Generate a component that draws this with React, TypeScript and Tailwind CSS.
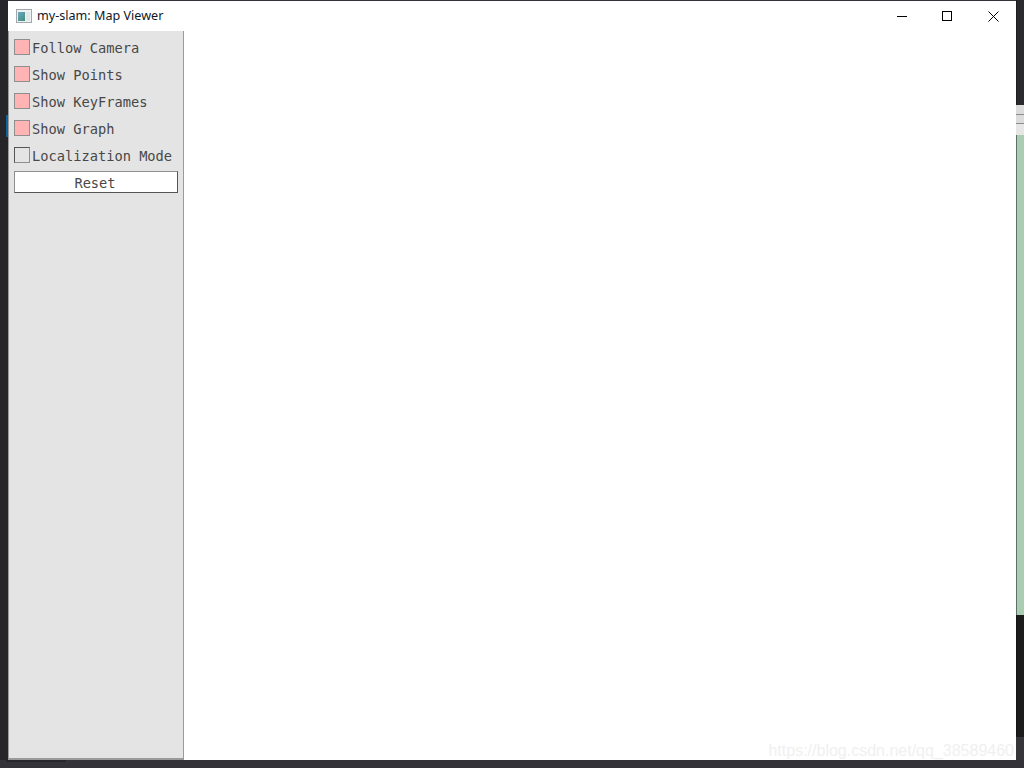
const mono = "font-['DejaVu_Sans_Mono',monospace] text-[13.7px] leading-[16px] text-[#484848]";

function Check({ label, on }: { label: string; on: boolean }) {
  return (
    <div className="flex h-[27px] items-start">
      <div
        className={
          on
            ? "h-[16px] w-[16px] border border-[#8f8f8f] bg-[#ffb3b3]"
            : "h-[16px] w-[16px] border border-[#555555] border-b-[#8f8f8f] border-r-[#8f8f8f] bg-[#e4e4e4]"
        }
      />
      <span className={mono + " ml-[2px] mt-[1px] whitespace-nowrap"}>{label}</span>
    </div>
  );
}

export default function App() {
  return (
    <div className="flex h-[768px] w-[1024px] flex-col overflow-hidden bg-[#323238]">
      <div className="flex h-[760px] w-full">
        <div className="flex h-full w-[8px] flex-col bg-[#26262a]">
          <div className="h-[115px]" />
          <div className="ml-[6px] h-[22px] w-[2px] bg-[#0e639c]" />
        </div>
        <div className="mt-[1px] flex h-[759px] w-[1008px] flex-col bg-white">
          <div className="flex h-[30px] items-center">
            <svg width="16" height="14" viewBox="0 0 16 14" className="ml-[8px]">
              <defs>
                <linearGradient id="pane" x1="0" y1="0" x2="1" y2="1">
                  <stop offset="0" stopColor="#6fa7c4" />
                  <stop offset="1" stopColor="#3f8f77" />
                </linearGradient>
              </defs>
              <rect x="0.5" y="0.5" width="15" height="13" fill="#eef2f3" stroke="#a4a8ac" />
              <rect x="2" y="3" width="7" height="9" fill="url(#pane)" />
              <rect x="10" y="3" width="4" height="9" fill="#e2e8ea" />
            </svg>
            <span className="ml-[5px] font-['Noto_Sans',sans-serif] text-[12.6px] leading-[16px] text-[#111827]">
              my-slam: Map Viewer
            </span>
            <div className="ml-auto flex items-center">
              <svg width="10" height="10" viewBox="0 0 10 10" className="mr-[35px]">
                <path d="M0 5.5H10" stroke="#000" strokeWidth="1" />
              </svg>
              <svg width="10" height="10" viewBox="0 0 10 10" className="mr-[36px]">
                <rect x="0.5" y="0.5" width="9" height="9" fill="none" stroke="#000" strokeWidth="1" />
              </svg>
              <svg width="11" height="11" viewBox="0 0 11 11" className="mr-[17px]">
                <path d="M0.5 0.5L10.5 10.5M10.5 0.5L0.5 10.5" stroke="#000" strokeWidth="1" />
              </svg>
            </div>
          </div>
          <div className="flex flex-1">
            <div className="flex w-[176px] flex-col border-b-2 border-l border-r border-[#9a9a9a] bg-[#e4e4e4] pl-[5px] pt-[8px]">
              <Check label="Follow Camera" on />
              <Check label="Show Points" on />
              <Check label="Show KeyFrames" on />
              <Check label="Show Graph" on />
              <Check label="Localization Mode" on={false} />
              <div
                className={
                  mono +
                  " -mt-[3px] flex h-[22px] w-[164px] items-center justify-center border border-[#555555] border-l-[#8f8f8f] border-t-[#8f8f8f] bg-white pr-[2px] pt-[2px]"
                }
              >
                Reset
              </div>
            </div>
            <div className="flex flex-1 items-end justify-end">
              <span className="mb-0 mr-[2px] font-['Liberation_Sans',sans-serif] text-[16px] leading-[18px] text-[#f0f0f0]">
                https://blog.csdn.net/qq_38589460
              </span>
            </div>
          </div>
        </div>
        <div className="flex h-full w-[8px] flex-col">
          <div className="h-[105px] border-l border-[#1c1c1c] bg-[#2a2a2e]" />
          <div className="h-[10px] border-b border-[#8c8c8c] bg-[#dcdcdc]" />
          <div className="h-[9px] border-b border-[#8c8c8c] bg-[#dcdcdc]" />
          <div className="h-[11px] bg-[#e6e6e6]" />
          <div className="h-[480px] border-l border-[#5f6f64] bg-[#a9cdb3]" />
          <div className="h-[122px] border-l border-[#141414] bg-[#1c1c1c]" />
          <div className="flex-1 bg-[#36363a]" />
        </div>
      </div>
      <div className="ml-[6px] h-[2px] w-[60px] bg-[#26262a]" />
    </div>
  );
}
